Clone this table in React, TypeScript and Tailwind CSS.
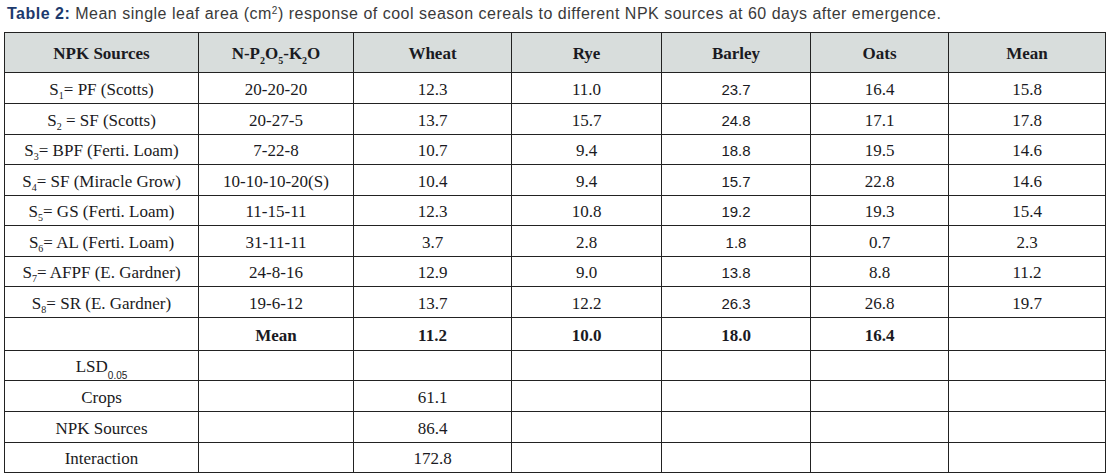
import React from 'react';

type Row = {
  src: React.ReactNode;
  npk: string;
  vals: string[];
};

const S = ({ n, sep = '= ' }: { n: number; sep?: string }) => (
  <>
    S<sub className="text-[10px] bottom-[-0.4em]">{n}</sub>
    {sep}
  </>
);

const rows: Row[] = [
  { src: <><S n={1} />PF (Scotts)</>, npk: '20-20-20', vals: ['12.3', '11.0', '23.7', '16.4', '15.8'] },
  { src: <><S n={2} sep=" = " />SF (Scotts)</>, npk: '20-27-5', vals: ['13.7', '15.7', '24.8', '17.1', '17.8'] },
  { src: <><S n={3} />BPF (Ferti. Loam)</>, npk: '7-22-8', vals: ['10.7', '9.4', '18.8', '19.5', '14.6'] },
  { src: <><S n={4} />SF (Miracle Grow)</>, npk: '10-10-10-20(S)', vals: ['10.4', '9.4', '15.7', '22.8', '14.6'] },
  { src: <><S n={5} />GS (Ferti. Loam)</>, npk: '11-15-11', vals: ['12.3', '10.8', '19.2', '19.3', '15.4'] },
  { src: <><S n={6} />AL (Ferti. Loam)</>, npk: '31-11-11', vals: ['3.7', '2.8', '1.8', '0.7', '2.3'] },
  { src: <><S n={7} />AFPF (E. Gardner)</>, npk: '24-8-16', vals: ['12.9', '9.0', '13.8', '8.8', '11.2'] },
  { src: <><S n={8} />SR (E. Gardner)</>, npk: '19-6-12', vals: ['13.7', '12.2', '26.3', '26.8', '19.7'] },
];

const rowH = ['h-[31px]', 'h-[31px]', 'h-[30px]', 'h-[31px]', 'h-[30px]', 'h-[31px]', 'h-[30px]', 'h-[31px]'];

const td = 'border border-[#222] text-center align-middle p-0 pt-[2px]';
const sans = "font-['Liberation_Sans',Arial,sans-serif] text-[15px]";

export default function App() {
  return (
    <div className="w-[1108px] h-[476px] bg-white overflow-hidden font-['Liberation_Serif','Times_New_Roman',serif] text-[#1a1a22]">
      <p className="h-[32px] pl-[7px] pt-[4px] text-[16px] leading-[20px] tracking-[0.5px] text-[#3a3a3a] font-['Liberation_Sans',Arial,sans-serif]">
        <span className="font-bold text-[#1d3a6e]">Table 2:</span> Mean single leaf area (cm<sup className="text-[10px] top-[-0.5em]">2</sup>) response of cool season cereals to different NPK sources at 60 days after emergence.
      </p>
      <table className="ml-[4px] w-[1101px] table-fixed border-collapse text-[17px] leading-none">
        <colgroup>
          <col className="w-[194px]" />
          <col className="w-[155px]" />
          <col className="w-[158px]" />
          <col className="w-[150px]" />
          <col className="w-[149px]" />
          <col className="w-[138px]" />
          <col className="w-[157px]" />
        </colgroup>
        <thead>
          <tr className="bg-[#d8dddc] font-bold">
            <th className={`${td} h-[40px]`}>NPK Sources</th>
            <th className={td}>
              N-P<sub className="text-[10px] bottom-[-0.45em]">2</sub>O<sub className="text-[10px] bottom-[-0.45em]">5</sub>-K<sub className="text-[10px] bottom-[-0.45em]">2</sub>O
            </th>
            <th className={td}>Wheat</th>
            <th className={td}>Rye</th>
            <th className={td}>Barley</th>
            <th className={td}>Oats</th>
            <th className={td}>Mean</th>
          </tr>
        </thead>
        <tbody>
          {rows.map((r, i) => (
            <tr key={i}>
              <td className={`${td} ${rowH[i]}`}>{r.src}</td>
              <td className={td}>{r.npk}</td>
              {r.vals.map((v, j) => (
                <td key={j} className={`${td} ${j === 2 ? sans : ''}`}>{v}</td>
              ))}
            </tr>
          ))}
          <tr className="font-bold">
            <td className={`${td} h-[33px]`}></td>
            <td className={td}>Mean</td>
            <td className={td}>11.2</td>
            <td className={td}>10.0</td>
            <td className={td}>18.0</td>
            <td className={td}>16.4</td>
            <td className={td}></td>
          </tr>
          <tr>
            <td className={`${td} h-[30px]`}>
              LSD<sub className="text-[10px] bottom-[-0.7em] font-['Liberation_Sans',Arial,sans-serif]">0.05</sub>
            </td>
            <td className={td}></td>
            <td className={td}></td>
            <td className={td}></td>
            <td className={td}></td>
            <td className={td}></td>
            <td className={td}></td>
          </tr>
          {[
            ['Crops', '61.1', 'h-[31px]'],
            ['NPK Sources', '86.4', 'h-[31px]'],
            ['Interaction', '172.8', 'h-[30px]'],
          ].map(([a, b, h]) => (
            <tr key={a}>
              <td className={`${td} ${h}`}>{a}</td>
              <td className={td}></td>
              <td className={td}>{b}</td>
              <td className={td}></td>
              <td className={td}></td>
              <td className={td}></td>
              <td className={td}></td>
            </tr>
          ))}
        </tbody>
      </table>
    </div>
  );
}
